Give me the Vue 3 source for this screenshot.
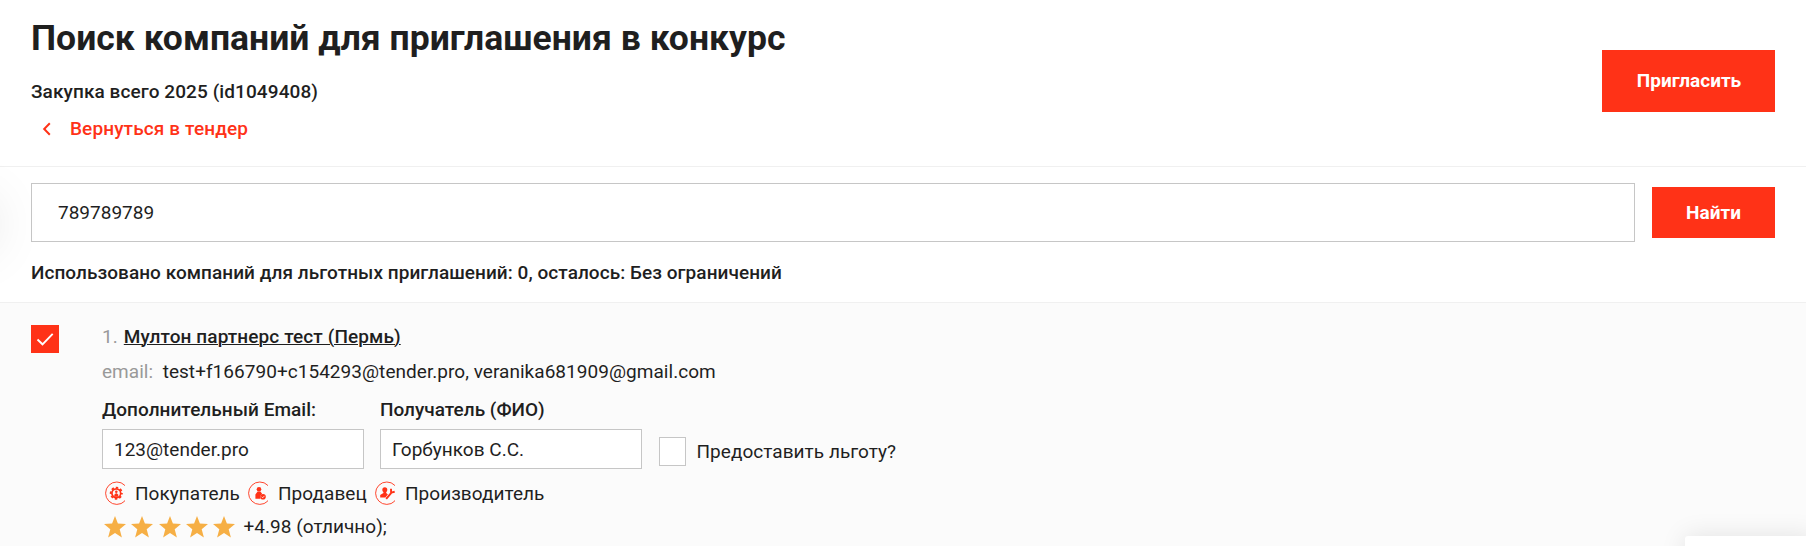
<script setup>
import { ref } from 'vue'

const query = ref('789789789')
const extraEmail = ref('123@tender.pro')
const recipient = ref('Горбунков С.С.')
const roles = [
  { id: 'buyer', label: 'Покупатель' },
  { id: 'seller', label: 'Продавец' },
  { id: 'maker', label: 'Производитель' },
]
</script>

<template>
  <main class="page">
    <div class="side-glow"></div>
    <header class="head">
      <div>
        <h1>Поиск компаний для приглашения в конкурс</h1>
        <p class="tender">Закупка всего 2025 (id1049408)</p>
        <a class="back">
          <svg width="9" height="14" viewBox="0 0 9 14"><path d="M7.8 1.2 2.200 7l5.600 5.800" fill="none" stroke="#ff3217" stroke-width="2" /></svg>
          <span>Вернуться в тендер</span>
        </a>
      </div>
      <button class="btn invite">Пригласить</button>
    </header>

    <section class="search">
      <div class="search-row">
        <input v-model="query" class="field query" />
        <button class="btn find">Найти</button>
      </div>
      <p class="quota">Использовано компаний для льготных приглашений: 0, осталось: Без ограничений</p>
    </section>

    <section class="company">
      <div class="check">
        <svg width="28" height="28" viewBox="0 0 28 28"><path d="M6.500 14.500 11.500 19.300 21.700 8.800" fill="none" stroke="#fff" stroke-width="1.9" /></svg>
      </div>
      <div class="body">
        <div class="name"><span class="grey">1.</span><a>Мултон партнерс тест (Пермь)</a></div>
        <div class="email"><span class="grey">email:</span><span>test+f166790+c154293@tender.pro, veranika681909@gmail.com</span></div>
        <div class="form">
          <label class="col"><span>Дополнительный Email:</span><input v-model="extraEmail" class="field small" /></label>
          <label class="col"><span class="fio">Получатель (ФИО)</span><input v-model="recipient" class="field small" /></label>
          <div class="benefit"><i class="box"></i><span>Предоставить льготу?</span></div>
        </div>
        <div class="roles">
          <div v-for="r in roles" :key="r.id" class="role" :class="r.id">
            <svg width="20" height="24" viewBox="0 0 20 24">
              <circle cx="11.800" cy="12.200" r="11.2" fill="none" stroke="#ff3217" stroke-width=".9" />
              <g v-if="r.id === 'buyer'">
                <circle cx="11.300" cy="12.200" r="4.400" fill="none" stroke="#ff3217" stroke-width="1.700" />
                <circle cx="11.300" cy="12.200" r="5.600" fill="none" stroke="#ff3217" stroke-width="1.800" stroke-dasharray="2.400 2" stroke-dashoffset="1.200" />
                <circle cx="11.300" cy="10.800" r="1.300" fill="#ff3217" />
                <path d="M9.300 15.800v-2l1.500-1.600h1l1.500 1.600v2z" fill="#ff3217" />
              </g>
              <g v-else-if="r.id === 'seller'" fill="#ff3217">
                <circle cx="11" cy="8.300" r="2.300" />
                <path d="M7.400 17.800v-4.300l2.200-3h2.800l1.700 2.200-2 2.200.4 2.900z" />
                <circle cx="15" cy="15.800" r="2.800" />
                <path d="m13.600 15.700 1.100 1.100 1.800-2" fill="none" stroke="#fbfbfb" stroke-width=".8" />
              </g>
              <g v-else fill="#ff3217">
                <circle cx="9.800" cy="8.700" r="2.500" />
                <path d="M5.200 16.600v-2.700l3.200-1.900V10.500h2.800v1.500l1.700 1.600-2.500 3z" />
                <path d="m11.200 17.800 5.300-6.200M16 7.800l.1 3.800 3.600-.8" fill="none" stroke="#ff3217" stroke-width="1.900" />
              </g>
            </svg>
            <span>{{ r.label }}</span>
          </div>
        </div>
        <div class="rating">
          <svg v-for="n in 5" :key="n" width="22" height="22" viewBox="0 0 22 22"><path d="M11 0l2.900 7.600 8.100.4-6.300 5.200 2.200 8.200L11 16.900l-6.900 4.500 2.200-8.200L0 8l8.100-.4z" fill="#f6af45" /></svg>
          <span>+4.98 (отлично);</span>
        </div>
      </div>
    </section>
    <div class="popup"></div>
  </main>
</template>

<style>
body { margin: 0; overflow: hidden; }
</style>

<style scoped>
* { box-sizing: border-box; }
.page { position: relative; height: 546px; overflow: hidden; background: #fff; color: #1f1f1f; font: 400 19px/24px Roboto, sans-serif; letter-spacing: .04px; display: flex; flex-direction: column; }
svg { display: block; flex: none; }
.side-glow { position: absolute; left: -60px; top: 194px; width: 60px; height: 60px; border-radius: 50%; box-shadow: 0 0 40px rgba(0, 0, 0, .07), 0 0 130px rgba(0, 0, 0, .06); pointer-events: none; }
.head { height: 167px; padding: 16px 31px 0; border-bottom: 1px solid #f0f0f0; display: flex; justify-content: space-between; align-items: flex-start; }
h1 { margin: 0; font-size: 35.5px; line-height: 44px; font-weight: 700; letter-spacing: .02px; }
p { margin: 0; }
.tender { margin-top: 20px; font-weight: 500; letter-spacing: .09px; }
.back { display: flex; align-items: center; gap: 19px; margin-top: 13px; padding-left: 11px; color: #ff3217; font-weight: 500; letter-spacing: .12px; }
.btn { flex: none; padding: 0; border: 0; background: #ff3217; color: #fff; font: 700 19px/24px Roboto, sans-serif; }
.invite { width: 173px; height: 62px; margin-top: 34px; padding-left: 1px; }
.find { width: 123px; height: 51px; }
.search { height: 136px; padding: 16px 31px 0; border-bottom: 1px solid #f0f0f0; }
.search-row { display: flex; align-items: center; gap: 17px; }
.field { border: 1px solid #c6c6c6; border-radius: 0; background: #fff; color: #1f1f1f; font: 400 19px/24px Roboto, sans-serif; outline: none; }
.query { flex: 1; min-width: 0; height: 59px; padding: 0 26px; background: transparent; }
.quota { margin-top: 19px; font-weight: 500; letter-spacing: .05px; }
.company { flex: 1; display: flex; gap: 43px; padding: 22px 31px 0; background: #fbfbfb; }
.check { width: 28px; height: 28px; background: #ff3217; }
.body { white-space: nowrap; }
.grey { color: #999; }
.name { display: flex; gap: 6px; }
.name a { font-weight: 500; letter-spacing: .1px; text-decoration: underline; text-decoration-thickness: 1px; text-underline-offset: 1px; }
.email { display: flex; gap: 9.5px; margin-top: 11px; }
.form { display: flex; gap: 16px; margin-top: 14px; }
.col { display: flex; flex-direction: column; gap: 7px; width: 262px; font-weight: 500; }
.fio { letter-spacing: 0; }
.small { width: 262px; height: 40px; padding: 0 11px; }
.benefit { display: flex; align-items: center; gap: 10.5px; margin: 39px 0 0 1px; height: 29px; }
.box { width: 27px; height: 29px; border: 1px solid #c6c6c6; background: #fff; }
.roles { display: flex; margin-top: 12px; padding-left: 3px; }
.role { display: flex; gap: 10px; }
.role span { padding-top: 1px; }
.buyer { width: 143px; }
.seller { width: 127px; }
.rating { display: flex; align-items: center; gap: 5.3px; margin-top: 9px; padding-left: 2px; }
.rating svg { margin-top: -1px; }
.rating span { margin-left: 3px; }
.popup { position: absolute; left: 1685px; top: 536px; width: 130px; height: 60px; border-radius: 3px; background: #fff; box-shadow: 0 0 26px rgba(0, 0, 0, .1); }
</style>
